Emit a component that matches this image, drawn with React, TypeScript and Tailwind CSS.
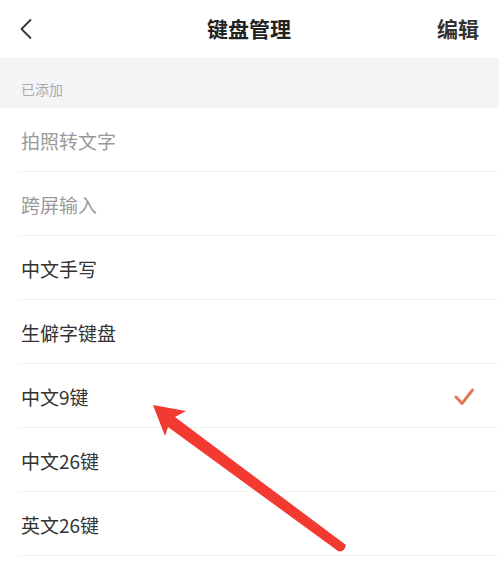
const added = [
  { name: "拍照转文字", muted: true },
  { name: "跨屏输入", muted: true },
  { name: "中文手写" },
  { name: "生僻字键盘" },
  { name: "中文9键", checked: true },
  { name: "中文26键" },
  { name: "英文26键" },
];

export default function App() {
  return (
    <div
      className="relative h-[564px] w-[499px] overflow-hidden bg-white"
      style={{ fontFamily: '"Noto Sans CJK SC", "Noto Sans", sans-serif' }}
    >
      <header className="grid h-[58px] grid-cols-[1fr_auto_1fr] items-center pl-[19px] pr-[20px]">
        <svg width="14" height="22" viewBox="0 0 14 22" className="text-[#333]">
          <path d="M12 1.5 L2.5 11 L12 20.5" fill="none" stroke="currentColor" strokeWidth="1.8" strokeLinejoin="round" />
        </svg>
        <h1 className="text-[21px] font-bold text-[#222]">键盘管理</h1>
        <span className="justify-self-end text-[21px] font-bold text-[#333]">编辑</span>
      </header>

      <div className="flex h-[50px] items-center bg-[#f4f5f7] px-[21px] pt-[12px] text-[14px] text-[#aaa]">
        已添加
      </div>

      <ul>
        {added.map((item) => (
          <li key={item.name} className="ml-[18px] flex h-[64px] items-center justify-between border-b border-[#f2f2f2] pl-[3px] pr-[24px] pt-[3px]">
            <span className={`text-[19px] ${item.muted ? "text-[#9a9a9a]" : "text-[#333]"}`}>{item.name}</span>
            {item.checked && (
              <svg width="22" height="20" viewBox="0 0 22 20">
                <path d="M3 10 L9 16.5 L19.5 3" fill="none" stroke="#e0785a" strokeWidth="3" strokeLinecap="round" strokeLinejoin="round" />
              </svg>
            )}
          </li>
        ))}
      </ul>

      {/* red pointer arrow drawn over the list */}
      <svg className="pointer-events-none absolute left-0 top-0" width="499" height="564" viewBox="0 0 499 564">
        <path
          d="M153 405 L186 411 L175 417 L346 545 Q344 553 338 551 L168 427 L165 436 Z"
          fill="#f23a30"
          strokeLinejoin="round"
        />
      </svg>
    </div>
  );
}
